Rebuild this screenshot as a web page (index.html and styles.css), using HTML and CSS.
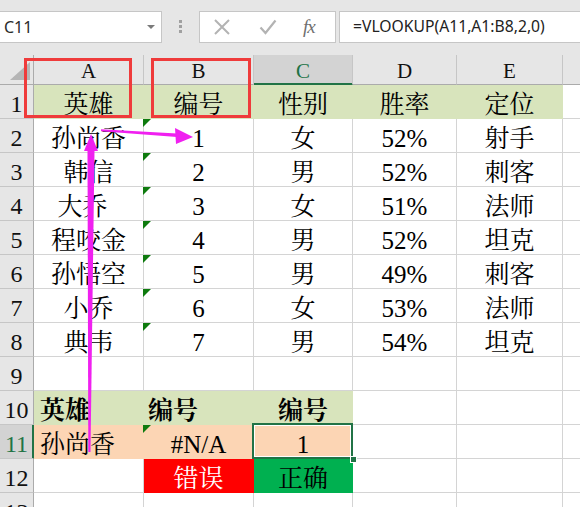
FILE: index.html
```html
<!DOCTYPE html>
<html lang="zh-CN">
<head>
<meta charset="utf-8">
<title>VLOOKUP</title>
<link rel="stylesheet" href="styles.css">
</head>
<body>
<div class="page">
  <div class="toolbar">
    <div class="namebox"><span class="name">C11</span><span class="caret"></span></div>
    <div class="grip"><i></i><i></i><i></i></div>
    <div class="fxbox">
      <svg class="ico cancel" width="18" height="18" viewBox="0 0 18 18"><path d="M2 2 L16 16 M16 2 L2 16" stroke="#b3b3b3" stroke-width="2" fill="none"/></svg>
      <svg class="ico enter" width="18" height="18" viewBox="0 0 18 18"><path d="M1.5 9.5 L6.5 15 L16.5 2.5" stroke="#b3b3b3" stroke-width="2.2" fill="none"/></svg>
      <span class="fx">fx</span>
    </div>
    <div class="formula">=VLOOKUP(A11,A1:B8,2,0)</div>
  </div>

  <div class="sheet">
    <div class="corner"><span class="tri"></span></div>
    <div class="ch">A</div><div class="ch">B</div><div class="ch sel">C</div><div class="ch">D</div><div class="ch">E</div><div class="ch"></div>

    <div class="rh">1</div><div class="cell hd">英雄</div><div class="cell hd">编号</div><div class="cell hd">性别</div><div class="cell hd">胜率</div><div class="cell hd">定位</div><div class="cell"></div>
    <div class="rh">2</div><div class="cell">孙尚香</div><div class="cell err">1</div><div class="cell">女</div><div class="cell">52%</div><div class="cell">射手</div><div class="cell"></div>
    <div class="rh">3</div><div class="cell">韩信</div><div class="cell err">2</div><div class="cell">男</div><div class="cell">52%</div><div class="cell">刺客</div><div class="cell"></div>
    <div class="rh">4</div><div class="cell sp">大乔</div><div class="cell err">3</div><div class="cell">女</div><div class="cell">51%</div><div class="cell">法师</div><div class="cell"></div>
    <div class="rh">5</div><div class="cell">程咬金</div><div class="cell err">4</div><div class="cell">男</div><div class="cell">52%</div><div class="cell">坦克</div><div class="cell"></div>
    <div class="rh">6</div><div class="cell">孙悟空</div><div class="cell err">5</div><div class="cell">男</div><div class="cell">49%</div><div class="cell">刺客</div><div class="cell"></div>
    <div class="rh">7</div><div class="cell">小乔</div><div class="cell err">6</div><div class="cell">女</div><div class="cell">53%</div><div class="cell">法师</div><div class="cell"></div>
    <div class="rh">8</div><div class="cell">典韦</div><div class="cell err">7</div><div class="cell">男</div><div class="cell">54%</div><div class="cell">坦克</div><div class="cell"></div>
    <div class="rh">9</div><div class="cell"></div><div class="cell"></div><div class="cell"></div><div class="cell"></div><div class="cell"></div><div class="cell"></div>
    <div class="rh">10</div><div class="cell hd b left la">英雄</div><div class="cell hd b left lb">编号</div><div class="cell hd b">编号</div><div class="cell"></div><div class="cell"></div><div class="cell"></div>
    <div class="rh rsel">11</div><div class="cell pe left la">孙尚香</div><div class="cell pe err">#N/A</div><div class="cell pe active">1</div><div class="cell"></div><div class="cell"></div><div class="cell"></div>
    <div class="rh">12</div><div class="cell"></div><div class="cell rd">错误</div><div class="cell gn">正确</div><div class="cell"></div><div class="cell"></div><div class="cell"></div>
    <div class="rh">13</div><div class="cell"></div><div class="cell"></div><div class="cell"></div><div class="cell"></div><div class="cell"></div><div class="cell"></div>
  </div>

  <svg class="overlay" width="580" height="507" viewBox="0 0 580 507">
    <rect x="25.5" y="59.5" width="105" height="57" fill="none" stroke="#ef3b3b" stroke-width="3"/>
    <rect x="152.5" y="59.5" width="97" height="57" fill="none" stroke="#ef3b3b" stroke-width="3"/>
    <polygon points="101,129.2 101,131.2 177,137 177,133.5" fill="#f020f0"/>
    <polygon points="175,128 193,137 176,144" fill="#f020f0"/>
    <polygon points="87.5,150 94.5,150 90.5,452 88.3,452" fill="#f020f0"/>
    <polygon points="91,134 84,151 98,151" fill="#f020f0"/>
  </svg>
</div>
</body>
</html>
```

FILE: styles.css
```css
html, body {
  margin: 0;
  padding: 0;
  background: #ffffff;
  overflow: hidden;
}

.page {
  position: relative;
  width: 580px;
  height: 507px;
  overflow: hidden;
}

/* ---------- formula bar ---------- */
.toolbar {
  height: 55px;
  box-sizing: border-box;
  padding-top: 11px;
  background: #e6e6e6;
  display: flex;
  align-items: flex-start;
}

.namebox {
  margin-left: -1px;
  width: 163px;
  height: 32px;
  box-sizing: border-box;
  border: 1px solid #c6c6c6;
  background: #fff;
  display: flex;
  align-items: center;
  padding-left: 4px;
}

.name {
  font-family: "Noto Sans", "Liberation Sans", sans-serif;
  font-size: 16px;
  color: #2b2b2b;
}

.caret {
  margin-left: auto;
  margin-right: 6px;
  width: 0;
  height: 0;
  border-left: 4px solid transparent;
  border-right: 4px solid transparent;
  border-top: 4px solid #7a7a7a;
}

.grip {
  width: 37px;
  display: flex;
  flex-direction: column;
  align-items: center;
  gap: 2px;
  padding-top: 9px;
}

.grip i {
  display: block;
  width: 3px;
  height: 3px;
  background: #a0a0a0;
}

.fxbox {
  width: 137px;
  height: 32px;
  box-sizing: border-box;
  border: 1px solid #c6c6c6;
  background: #fff;
  display: flex;
  align-items: center;
}

.ico { display: block; }
.cancel { margin-left: 13px; }
.enter { margin-left: 28px; }

.fx {
  margin-left: 26px;
  font-family: "Liberation Serif", serif;
  font-style: italic;
  font-size: 19px;
  color: #6f6f6f;
  letter-spacing: -1px;
}

.formula {
  margin-left: 3px;
  flex: 1;
  margin-right: -10px;
  height: 32px;
  box-sizing: border-box;
  border: 1px solid #c6c6c6;
  background: #fff;
  padding-left: 13px;
  font-family: "Noto Sans", "Liberation Sans", sans-serif;
  font-size: 15.7px;
  line-height: 29px;
  color: #222;
  white-space: nowrap;
}

/* ---------- sheet ---------- */
.sheet {
  display: grid;
  grid-template-columns: 34px 110px 110px 99px 104px 106px 30px;
  grid-template-rows: 30px repeat(13, 34px);
}

.corner {
  position: relative;
  background: #e6e6e6;
  border-right: 1px solid #ababab;
  border-bottom: 1px solid #ababab;
}

.tri {
  position: absolute;
  right: 3px;
  bottom: 4px;
  width: 0;
  height: 0;
  border-left: 20px solid transparent;
  border-bottom: 18px solid #b5b5b5;
}

.ch {
  background: #e6e6e6;
  border-right: 1px solid #c6c6c6;
  border-bottom: 1px solid #ababab;
  text-align: center;
  font-family: "Liberation Serif", serif;
  font-size: 21px;
  line-height: 29px;
  padding-top: 2px;
  box-sizing: border-box;
  color: #111;
}

.ch.sel {
  background: #d3d3d3;
  color: #217346;
  border-bottom-color: #217346;
  box-shadow: inset 0 -1px 0 #217346;
}

.rh {
  background: #e6e6e6;
  border-right: 1px solid #ababab;
  border-bottom: 1px solid #c6c6c6;
  text-align: center;
  font-family: "Liberation Serif", serif;
  font-size: 24px;
  line-height: 33px;
  padding-top: 3px;
  box-sizing: border-box;
  color: #111;
}

.rh.rsel {
  background: #d3d3d3;
  color: #217346;
  border-right-color: #217346;
  box-shadow: inset -1px 0 0 #217346;
}

.cell {
  position: relative;
  box-sizing: border-box;
  border-right: 1px solid #d4d4d4;
  border-bottom: 1px solid #d4d4d4;
  text-align: center;
  font-family: "Liberation Serif", "Noto Serif CJK SC", "Noto Sans CJK SC", serif;
  font-size: 25px;
  line-height: 33px;
  padding-top: 3px;
  color: #000;
  white-space: nowrap;
}

.cell.left { text-align: left; }
.cell.la { padding-left: 6px; }
.cell.lb { padding-left: 4px; }
.cell.sp { padding-right: 12px; }
.cell.b { font-weight: 700; }

.cell.hd { background: #d8e4bc; border-color: #d8e4bc; }
.cell.pe { background: #fcd5b4; border-color: #fcd5b4; }
.cell.rd { background: #ff0000; border-color: #ff0000; color: #fff; }
.cell.gn { background: #00b050; border-color: #00b050; color: #000; }

.cell.err::before {
  content: "";
  position: absolute;
  top: 0;
  left: -1px;
  width: 0;
  height: 0;
  border-top: 8px solid #0f7b0f;
  border-right: 8px solid transparent;
}

.cell.active::after {
  content: "";
  position: absolute;
  top: -2px;
  left: -2px;
  right: -1px;
  bottom: -1px;
  border: 2px solid #217346;
  box-shadow: inset 0 0 0 1px #fff;
}

.cell.active::before {
  content: "";
  position: absolute;
  right: -5px;
  bottom: -5px;
  width: 5px;
  height: 5px;
  background: #217346;
  border: 1px solid #fff;
  z-index: 2;
}

/* ---------- annotations ---------- */
.overlay {
  position: absolute;
  left: 0;
  top: 0;
  pointer-events: none;
}
```
